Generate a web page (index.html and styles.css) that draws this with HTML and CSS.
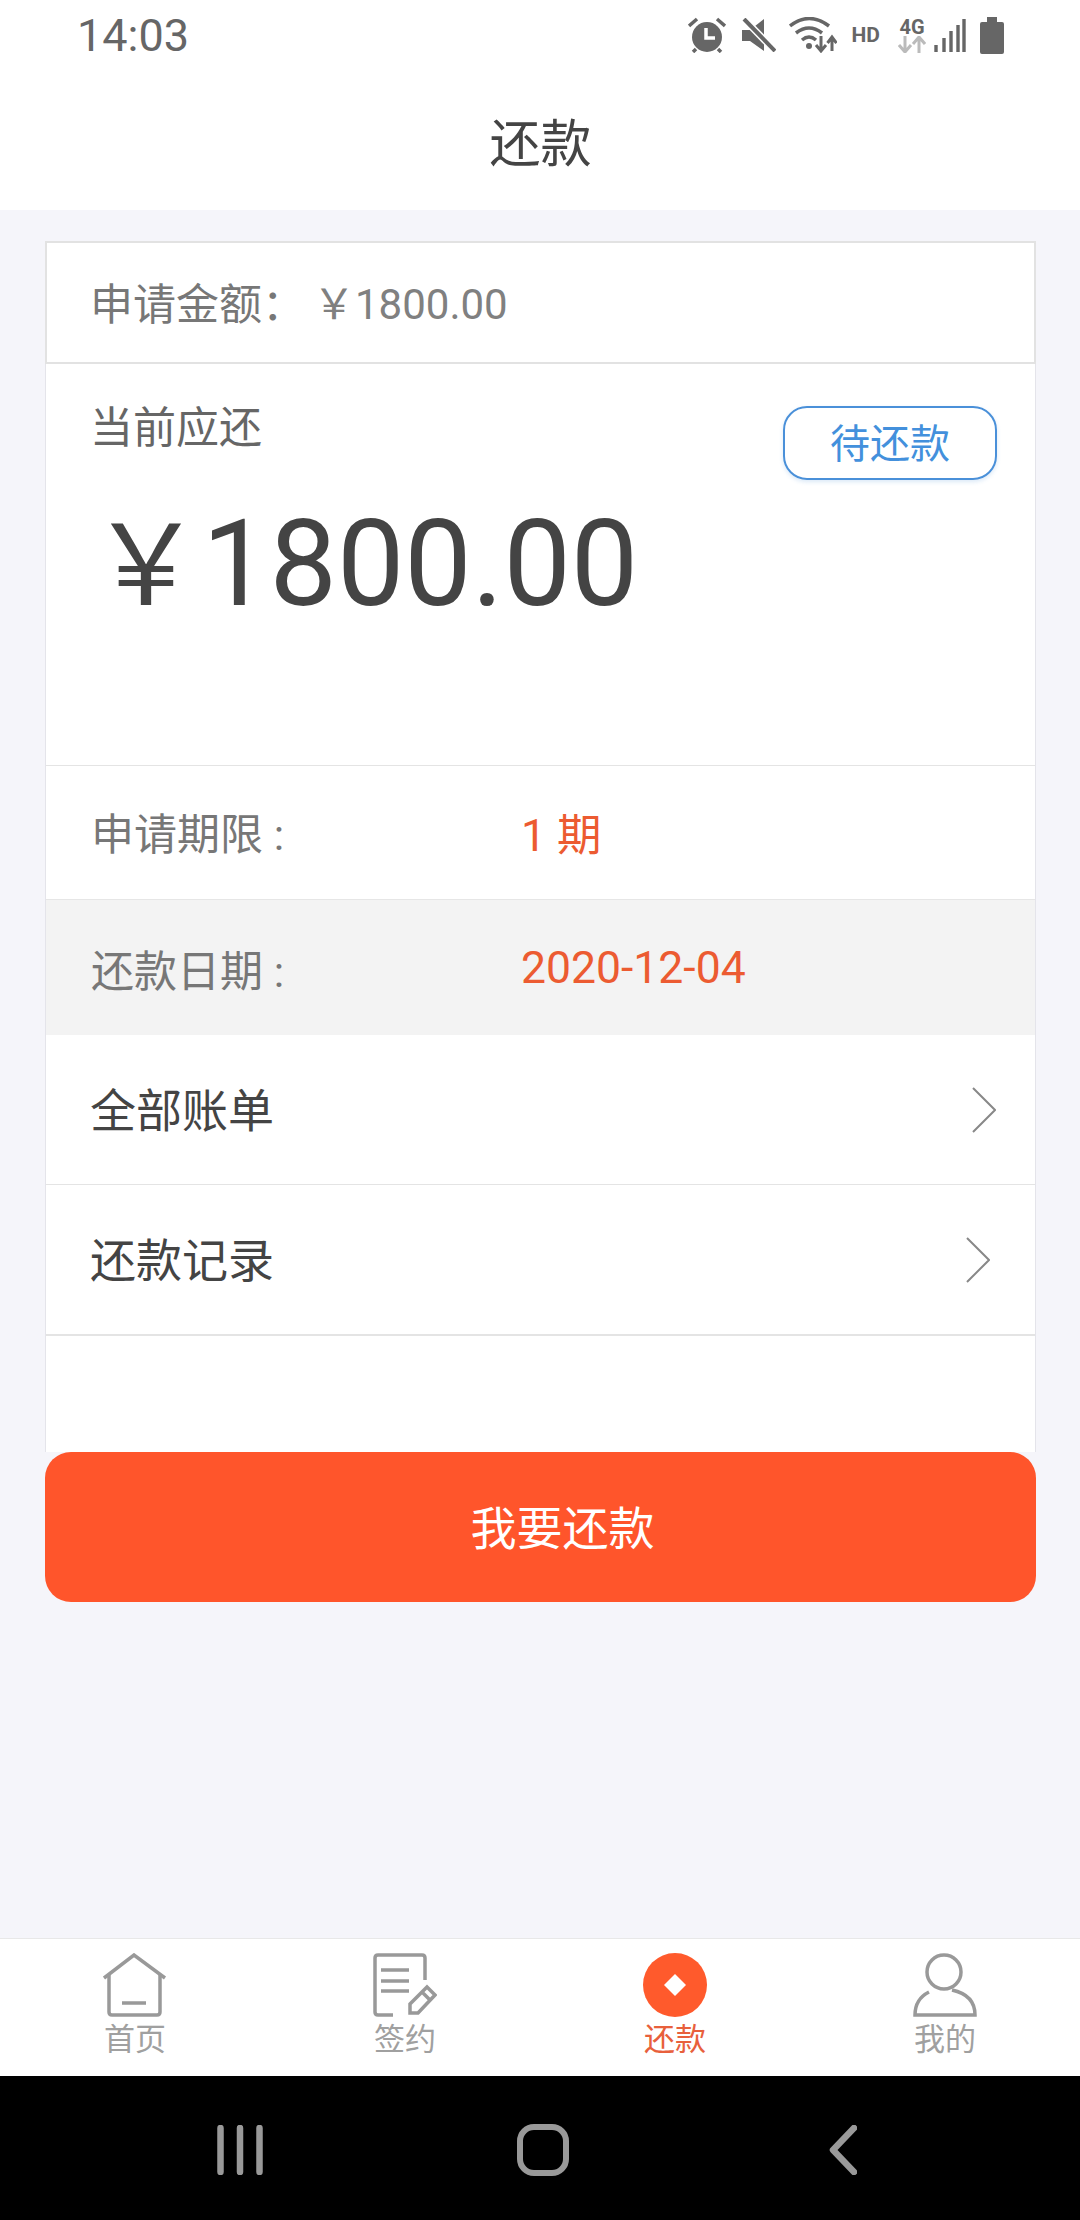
FILE: index.html
```html
<!DOCTYPE html>
<html lang="zh-CN">
<head>
    <meta charset="UTF-8">
    <meta name="viewport" content="width=device-width, initial-scale=1.0">
    <title>还款</title>
    <link rel="stylesheet" href="styles.css">
</head>
<body>

    <!-- Status bar -->
    <div class="status-bar">
        <span class="status-time">14:03</span>
        <div class="status-icons">
            <svg class="ic-alarm" width="38" height="36" viewBox="0 0 38 36">
                <circle cx="19" cy="20" r="15" fill="#666"/>
                <path d="M1 9 L9 2 M37 9 L29 2 M8 32 L5 35 M30 32 L33 35" stroke="#666" stroke-width="3.5" fill="none"/>
                <path d="M18 11 V21 H27" stroke="#fff" stroke-width="3.5" fill="none"/>
            </svg>
            <svg class="ic-mute" width="34" height="34" viewBox="0 0 34 34">
                <path d="M0 12 H8 L22 1 V33 L8 23 H0 Z" fill="#666"/>
                <path d="M2 1 L33 33" stroke="#fff" stroke-width="7"/>
                <path d="M2 1 L33 33" stroke="#666" stroke-width="4"/>
            </svg>
            <svg class="ic-wifi" width="48" height="36" viewBox="0 0 48 36">
                <path d="M1 9 Q20 -6 40 9 M7 16 Q20 6 33 16 M13 23 Q20 17 27 23" stroke="#666" stroke-width="3.5" fill="none"/>
                <circle cx="20" cy="29" r="3" fill="#666"/>
                <path d="M32 19 V33 M27 28 L32 34 L37 28 M43 34 V22 M38.500 26 L43 20 L47.500 26" stroke="#666" stroke-width="3" fill="none"/>
            </svg>
            <span class="ic-hd">HD</span>
            <div class="ic-net">
                <span class="net-label">4G</span>
                <svg width="28" height="17" viewBox="0 0 28 17">
                    <path d="M7 0 V15 M1 9 L7 16 L13 9" stroke="#bbb" stroke-width="3" fill="none"/>
                    <path d="M21 17 V2 M15 8 L21 1 L27 8" stroke="#bbb" stroke-width="3" fill="none"/>
                </svg>
            </div>
            <svg class="ic-signal" width="32" height="34" viewBox="0 0 32 34">
                <path d="M2 34 V27 M10 34 V20 M17 34 V13 M24 34 V7 M30 34 V1" stroke="#666" stroke-width="3.4" fill="none"/>
            </svg>
            <svg class="ic-battery" width="24" height="37" viewBox="0 0 24 37">
                <path d="M7 0 H17 V5 H22 Q24 5 24 7 V35 Q24 37 22 37 H2 Q0 37 0 35 V7 Q0 5 2 5 H7 Z" fill="#666"/>
            </svg>
        </div>
    </div>

    <!-- Title -->
    <header class="page-title">还款</header>

    <!-- Main Content -->
    <main class="content">
        <div class="card">
            <div class="apply-row">
                <span class="apply-label">申请金额：</span><span class="apply-amount">￥1800.00</span>
            </div>

            <div class="due-box">
                <div class="due-top">
                    <span class="due-label">当前应还</span>
                    <span class="due-badge">待还款</span>
                </div>
                <div class="due-amount"><span class="due-yen">￥</span>1800.00</div>
            </div>

            <div class="info-row">
                <span class="info-label">申请期限 :</span>
                <span class="info-value">1 期</span>
            </div>
            <div class="info-row info-row-grey">
                <span class="info-label">还款日期 :</span>
                <span class="info-value">2020-12-04</span>
            </div>

            <div class="link-row">
                <span class="link-text">全部账单</span>
                <svg class="chevron" width="24" height="46" viewBox="0 0 24 46"><path d="M1 1 L23 23 L1 45" stroke="#888" stroke-width="2" fill="none"/></svg>
            </div>
            <div class="link-row link-row-second">
                <span class="link-text">还款记录</span>
                <svg class="chevron" width="24" height="46" viewBox="0 0 24 46"><path d="M1 1 L23 23 L1 45" stroke="#888" stroke-width="2" fill="none"/></svg>
            </div>
            <div class="card-space"></div>
        </div>

        <button class="pay-btn">我要还款</button>
    </main>

    <!-- Bottom tabs -->
    <nav class="tabbar">
        <div class="tab">
            <svg width="64" height="64" viewBox="0 0 64 64">
                <path d="M1 25 L31 2 L62 25" stroke="#999" stroke-width="3.5" fill="none"/>
                <path d="M6 22 V59 Q6 62 9 62 H54 Q57 62 57 59 V22" stroke="#999" stroke-width="3.5" fill="none"/>
                <path d="M19 50 H43" stroke="#999" stroke-width="3.5"/>
            </svg>
            <span>首页</span>
        </div>
        <div class="tab">
            <svg width="64" height="64" viewBox="0 0 64 64">
                <path d="M20 62 H5 Q2 62 2 59 V5 Q2 2 5 2 H49 Q52 2 52 5 V27" stroke="#999" stroke-width="3.5" fill="none"/>
                <path d="M8 17 H36 M8 28 H36 M8 38 H36" stroke="#999" stroke-width="3.5"/>
                <path d="M37 60 V51 L54 34 L62 42 L45 60 Z M49 39 L57 47" stroke="#999" stroke-width="3.5" fill="none"/>
            </svg>
            <span>签约</span>
        </div>
        <div class="tab tab-active">
            <svg width="64" height="64" viewBox="0 0 64 64">
                <circle cx="32" cy="32" r="32" fill="#ff5a2c"/>
                <path d="M32 21 L43 32 L32 43 L21 32 Z" fill="#fff"/>
            </svg>
            <span>还款</span>
        </div>
        <div class="tab">
            <svg width="64" height="64" viewBox="0 0 64 64">
                <circle cx="31" cy="19" r="17" stroke="#999" stroke-width="3.500" fill="none"/>
                <path d="M16 39 Q2 46 2 62 H62 Q62 42 39 37" stroke="#999" stroke-width="3.500" fill="none"/>
            </svg>
            <span>我的</span>
        </div>
    </nav>

    <!-- Android navigation keys -->
    <div class="nav-keys">
        <svg width="46" height="50" viewBox="0 0 46 50">
            <path d="M3.500 3 V47 M23 3 V47 M42.500 3 V47" stroke="#999" stroke-width="6.500" stroke-linecap="round"/>
        </svg>
        <svg class="nav-home" width="52" height="52" viewBox="0 0 52 52">
            <rect x="3" y="3" width="46" height="46" rx="14" stroke="#999" stroke-width="6" fill="none"/>
        </svg>
        <svg width="28" height="50" viewBox="0 0 28 50">
            <path d="M25 3 L4 25 L25 47" stroke="#999" stroke-width="6.500" stroke-linecap="round" stroke-linejoin="round" fill="none"/>
        </svg>
    </div>

</body>
</html>
```

FILE: styles.css
```css
/* General styles */
body {
    margin: 0;
    height: 2220px;
    display: flex;
    flex-direction: column;
    background-color: #f5f5fa;
    font-family: Roboto, "Noto Sans CJK SC", sans-serif;
    color: #444;
}

/* Status bar */
.status-bar {
    height: 70px;
    padding: 0 76px 0 77px;
    display: flex;
    justify-content: space-between;
    align-items: center;
    background-color: #fff;
    flex-shrink: 0;
}

.status-time {
    font-size: 45px;
    color: #666;
}

.status-icons {
    display: flex;
    align-items: center;
}

.ic-mute { margin-left: 16px; }
.ic-wifi { margin-left: 13px; }

.ic-hd {
    margin-left: 15px;
    font-size: 21px;
    font-weight: 700;
    color: #666;
}

.ic-net {
    margin-left: 18px;
    width: 28px;
    display: flex;
    flex-direction: column;
    align-items: center;
}

.net-label {
    font-size: 20px;
    font-weight: 700;
    line-height: 18px;
    color: #666;
}

.ic-signal { margin-left: 8px; }
.ic-battery { margin-left: 14px; }

/* Title */
.page-title {
    height: 140px;
    line-height: 150px;
    padding-left: 1px;
    text-align: center;
    font-size: 51px;
    background-color: #fff;
    flex-shrink: 0;
}

/* Main Content */
.content {
    flex-grow: 1;
    padding: 31px 44px 0 45px;
}

.card {
    background-color: #fff;
    border-left: 1px solid #e4e4ea;
    border-right: 1px solid #e4e4ea;
}

.apply-row {
    height: 115px;
    margin: 0 -1px;
    padding-left: 43px;
    padding-bottom: 4px;
    display: flex;
    align-items: center;
    font-size: 43px;
    color: #777;
    border: 2px solid #e2e2e2;
}

.apply-label {
    width: 223px;
}

.apply-amount {
    font-size: 42px;
    color: #808080;
}

.due-box {
    height: 401px;
    padding: 39px 38px 0 44px;
    box-sizing: border-box;
}

.due-top {
    display: flex;
    justify-content: space-between;
    align-items: flex-start;
}

.due-label {
    font-size: 43px;
    line-height: 50px;
    color: #666;
}

.due-badge {
    width: 210px;
    height: 70px;
    margin-top: 3px;
    border: 2px solid #4a90d9;
    border-radius: 24px;
    text-align: center;
    font-size: 40px;
    line-height: 73px;
    color: #4390dc;
    box-shadow: 0 2px 4px rgba(74, 144, 217, 0.2);
}

.due-amount {
    margin-top: 14px;
    font-size: 120px;
    line-height: 140px;
    color: #444;
}

.due-yen {
    font-size: 112px;
}

.info-row {
    height: 134px;
    padding-left: 45px;
    padding-bottom: 3px;
    box-sizing: border-box;
    display: flex;
    align-items: center;
    border-top: 1px solid #e4e4e4;
}

.info-row-grey {
    background-color: #f3f3f3;
    border-top: 1px solid #e6e6e6;
    padding-bottom: 0;
    height: 136px;
}

.info-label {
    width: 430px;
    font-size: 43px;
    color: #777;
}

.info-value {
    font-size: 44.5px;
    color: #ec5b31;
}

.link-row {
    height: 149px;
    padding: 0 39px 0 44px;
    display: flex;
    justify-content: space-between;
    align-items: center;
    font-size: 46px;
    color: #444;
    border-bottom: 1px solid #e4e4e4;
}

.link-row-second {
    padding-right: 45px;
    border-bottom-width: 2px;
}

.link-text {
    margin-bottom: 5px;
}

.card-space {
    height: 116px;
}

.pay-btn {
    display: block;
    width: 991px;
    height: 150px;
    padding: 0 0 4px 44px;
    border: none;
    border-radius: 26px;
    background-color: #ff552b;
    color: #fff;
    font-family: inherit;
    font-size: 46px;
}

/* Bottom tabs */
.tabbar {
    height: 137px;
    display: flex;
    background-color: #fff;
    border-top: 1px solid #e8e8e8;
    flex-shrink: 0;
}

.tab {
    flex: 1;
    padding-top: 14px;
    display: flex;
    flex-direction: column;
    align-items: center;
    font-size: 31px;
    line-height: 46px;
    color: #a0a0a0;
}

.tab-active {
    color: #e8603c;
}

/* Android navigation keys */
.nav-keys {
    height: 144px;
    display: flex;
    align-items: center;
    padding: 4px 223px 0 217px;
    box-sizing: border-box;
    justify-content: space-between;
    background-color: #000;
    flex-shrink: 0;
}

.nav-home {
    margin-left: -6px;
}
```
